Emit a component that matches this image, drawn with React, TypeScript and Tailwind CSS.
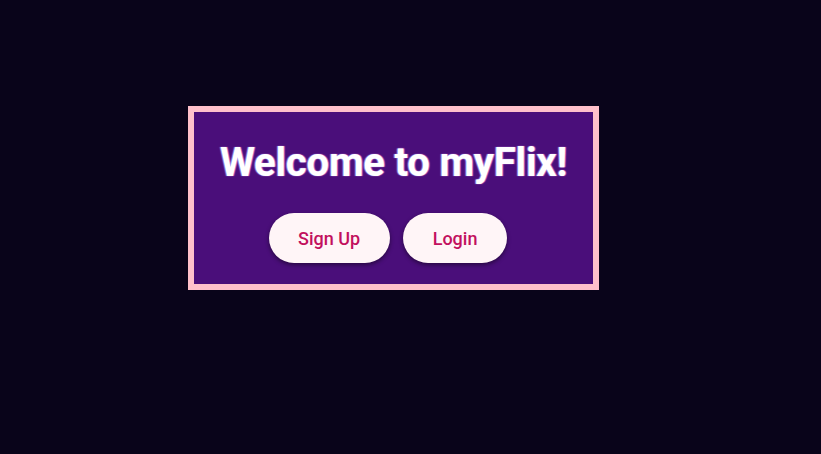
import React from "react";

export default function App() {
  return (
    <div className="min-h-[454px] w-full bg-[#09041a] pt-[106px] pl-[188px] font-['Roboto',sans-serif]">
      {/* Welcome card */}
      <div className="w-[411px] border-[6px] border-[#ffc0cb] bg-[#4a0e7a] pt-[27px] pb-[21px] flex flex-col items-center">
        <h1 className="text-[40px] leading-[48px] font-bold tracking-[-0.2px] text-white [text-shadow:-1px_0_1px_#8a8cff,1px_0_1px_#ff7ab8]">
          Welcome to myFlix!
        </h1>
        <div className="mt-[26px] flex justify-center pl-[2px]">
          <button className="mr-[13px] h-[50px] rounded-full bg-[#fff5f7] px-[29.5px] text-[18px] font-medium text-[#c2105e] shadow-[0_2px_4px_rgba(0,0,0,0.45)]">
            Sign Up
          </button>
          <button className="mr-[13px] h-[50px] rounded-full bg-[#fff5f7] px-[30px] text-[18px] font-medium text-[#c2105e] shadow-[0_2px_4px_rgba(0,0,0,0.45)]">
            Login
          </button>
        </div>
      </div>
    </div>
  );
}
